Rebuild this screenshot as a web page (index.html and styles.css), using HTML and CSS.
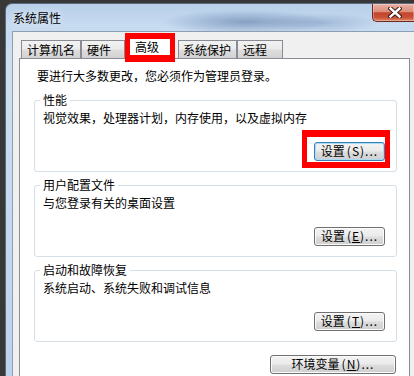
FILE: index.html
```html
<!DOCTYPE html>
<html lang="zh-CN">
<head>
<meta charset="utf-8">
<title>系统属性</title>
<link rel="stylesheet" href="styles.css">
</head>
<body>
<div class="window">
  <div class="titlebar">
    <span class="title">系统属性</span>
    <span class="close">
      <svg width="14" height="11" viewBox="0 0 14 11">
        <path d="M2.5 1.5 L11.5 9.5 M11.5 1.5 L2.5 9.5" stroke="#3a1a14" stroke-width="4.4" stroke-linecap="square" fill="none"/>
        <path d="M2.5 1.5 L11.5 9.5 M11.5 1.5 L2.5 9.5" stroke="#ffffff" stroke-width="2.4" stroke-linecap="square" fill="none"/>
      </svg>
    </span>
  </div>
  <div class="client">
    <div class="tabs">
      <div class="tab t1">计算机名</div>
      <div class="tab t2">硬件</div>
      <div class="tab sel">高级</div>
      <div class="tab t4">系统保护</div>
      <div class="tab t5">远程</div>
    </div>
    <div class="panel">
      <p class="intro">要进行大多数更改，您必须作为管理员登录。</p>
      <fieldset class="group">
        <legend>性能</legend>
        <p class="desc">视觉效果，处理器计划，内存使用，以及虚拟内存</p>
        <div class="actions"><span class="hl"><button class="btn default">设置<span class="lat">(S)...</span></button></span></div>
      </fieldset>
      <fieldset class="group">
        <legend>用户配置文件</legend>
        <p class="desc">与您登录有关的桌面设置</p>
        <div class="actions"><button class="btn">设置<span class="lat">(<u>E</u>)...</span></button></div>
      </fieldset>
      <fieldset class="group">
        <legend>启动和故障恢复</legend>
        <p class="desc">系统启动、系统失败和调试信息</p>
        <div class="actions"><button class="btn">设置<span class="lat">(<u>T</u>)...</span></button></div>
      </fieldset>
      <div class="env"><button class="btn wide">环境变量<span class="lat">(<u>N</u>)...</span></button></div>
    </div>
  </div>
</div>
</body>
</html>
```
FILE: styles.css
```css
html, body {
  margin: 0;
  padding: 0;
  width: 414px;
  height: 376px;
  overflow: hidden;
  background: #383838;
}
body {
  font-family: "Noto Sans CJK SC", "Noto Sans", sans-serif;
  font-size: 12px;
  color: #000;
}
.window {
  margin: 3px 0 0 5px;
  width: 409px;
  height: 373px;
  box-sizing: border-box;
  border-top: 1px solid #5a6b80;
  border-left: 1px solid #5a6b80;
  border-radius: 7px 0 0 0;
  padding-left: 6px;
  background:
    radial-gradient(ellipse 85px 12px at 240px 18px, rgba(60,90,140,0.45), rgba(60,90,140,0) 100%),
    radial-gradient(ellipse 60px 10px at 315px 19px, rgba(80,110,160,0.3), rgba(80,110,160,0) 100%),
    linear-gradient(to bottom, #b7cfe9 0px, #c6daf0 20px, #cde0f3 60px, #bcd3ec 373px);
}
.titlebar {
  height: 27px;
  display: flex;
  align-items: flex-start;
}
.title {
  margin-left: 1px;
  line-height: 27px;
  color: #000;
  text-shadow: 0 0 6px rgba(255,255,255,0.9);
}
.close {
  margin-left: auto;
  width: 42px;
  height: 18px;
  box-sizing: border-box;
  border: 1px solid #6e2a1f;
  border-top: none;
  border-right: none;
  border-radius: 0 0 0 5px;
  background: linear-gradient(to bottom, #eab0a2 0%, #dc8e7c 45%, #c4442c 52%, #c95239 80%, #de8a6a 100%);
  box-shadow: inset 0 0 0 1px rgba(255,255,255,0.3);
  display: flex;
  align-items: center;
  justify-content: center;
  padding-left: 2px;
}
.client {
  box-sizing: border-box;
  background: #f0f0f0;
  border-top: 1px solid #8d9db2;
  border-left: 1px solid #8d9db2;
  padding-left: 6px;
  height: 345px;
}
.tabs {
  display: flex;
  align-items: flex-end;
  height: 26px;
  padding-left: 2px;
}
.tab {
  box-sizing: border-box;
  height: 18px;
  border: 1px solid #898c95;
  border-bottom: none;
  padding-left: 5px;
  line-height: 17px;
  white-space: nowrap;
  background: linear-gradient(to bottom, #f2f2f2 0%, #ebebeb 45%, #dddddd 55%, #d2d2d2 100%);
}
.t1 { width: 60px; }
.t2 { width: 44px; }
.t4 { width: 59px; padding-left: 4px; }
.t5 { width: 46px; }
.tab.sel {
  width: 50px;
  height: 29px;
  border-style: solid;
  border-color: #ff0000;
  border-width: 6px 5px 7px 5px;
  background: #fff;
  margin-bottom: -4px;
  margin-right: 3px;
  padding-left: 5px;
  line-height: 16px;
  position: relative;
  z-index: 1;
}
.panel {
  width: 391px;
  height: 318px;
  box-sizing: border-box;
  background: #fff;
  border: 1px solid #898c95;
  border-bottom: none;
  padding-top: 9px;
  overflow: hidden;
}
.intro {
  margin: 0 0 8px 17px;
  line-height: 16px;
}
.group {
  margin: 0 12px 5px 14px;
  padding: 2px 11px 10px 8px;
  border: 1px solid #d5dfe5;
  border-radius: 3px;
  min-width: 0;
}
.group legend {
  padding: 0 3px;
  margin-left: -3px;
  line-height: 16px;
}
.desc {
  margin: 0 0 16px 0;
  line-height: 16px;
}
.actions {
  display: flex;
  justify-content: flex-end;
}
.btn {
  width: 71px;
  height: 19px;
  box-sizing: border-box;
  padding: 0 0 1px 0;
  margin: 0;
  font-family: "Noto Sans CJK SC", "Noto Sans", sans-serif;
  font-size: 12px;
  line-height: 16px;
  color: #000;
  border: 1px solid #707070;
  border-radius: 3px;
  background: linear-gradient(to bottom, #f3f3f3 0%, #ebebeb 48%, #dddddd 52%, #cfcfcf 100%);
  box-shadow: inset 0 0 0 1px #fbfbfb;
}
.btn.default {
  border-color: #3c7fb1;
  box-shadow: inset 0 0 0 1px #a6dcf6;
}
.lat {
  letter-spacing: 1px;
  margin-left: 2px;
}
.hl {
  position: relative;
  display: block;
}
.hl::after {
  content: "";
  position: absolute;
  top: -12px;
  right: -5px;
  bottom: -7px;
  left: -12px;
  border-style: solid;
  border-color: #ff0000;
  border-width: 7px 5px 6px 5px;
  pointer-events: none;
}
.env {
  display: flex;
  justify-content: flex-end;
  margin: 13px 13px 0 0;
}
.btn.wide {
  width: 126px;
}
```
